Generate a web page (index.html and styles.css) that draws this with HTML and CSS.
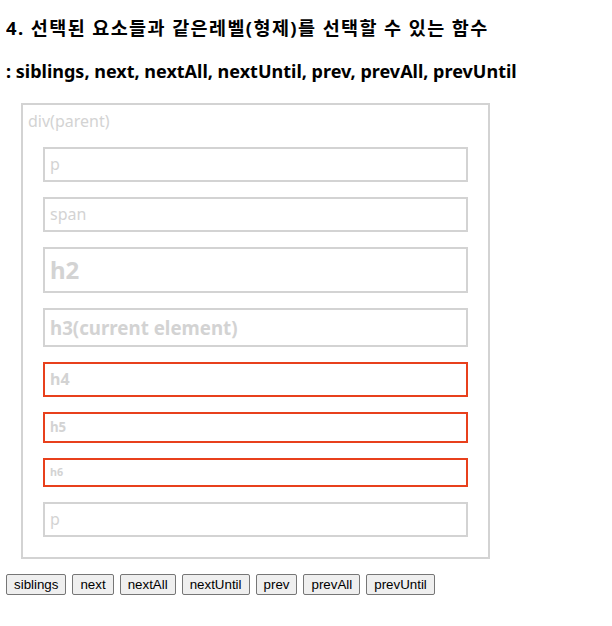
FILE: index.html
```html
<!DOCTYPE html>
<html lang="ko">

<head>
    <meta charset="UTF-8" />
    <title>jQuery siblings</title>
    <link rel="stylesheet" href="styles.css">
</head>

<body>
    <h3 class="title">4. 선택된 요소들과 같은레벨(형제)를 선택할 수 있는 함수</h3>
    <h3>: siblings, next, nextAll, nextUntil, prev, prevAll, prevUntil</h3>

    <div class="siblings">div(parent)
        <p>p</p>
        <span>span</span>
        <h2>h2</h2>
        <h3 class="current">h3(current element)</h3>
        <h4 class="hit">h4</h4>
        <h5 class="hit">h5</h5>
        <h6 class="hit">h6</h6>
        <p>p</p>
    </div>

    <div class="buttons">
        <button>siblings</button>
        <button>next</button>
        <button>nextAll</button>
        <button>nextUntil</button>
        <button>prev</button>
        <button>prevAll</button>
        <button>prevUntil</button>
    </div>
</body>

</html>
```

FILE: styles.css
```css
body {
    margin: 0 6px;
    font-family: "Noto Sans", "Noto Sans CJK KR", sans-serif;
    color: #000;
}

h3 {
    font-size: 18px;
    line-height: 25px;
    margin: 19px 0;
}

h3.title {
    margin-top: 15px;
    font-size: 18.5px;
    letter-spacing: 1.4px;
}

.siblings {
    width: 455px;
    margin: 15px;
    padding: 5px;
    border: 2px solid lightgrey;
    color: lightgrey;
    font-size: 16px;
    line-height: 22px;
}

.siblings * {
    display: block;
    margin: 15px;
    padding: 5px;
    border: 2px solid lightgrey;
    color: lightgrey;
    line-height: 21px;
}

.siblings h2 {
    font-size: 24px;
    line-height: 32px;
}

.siblings h3 {
    font-size: 18.72px;
    line-height: 25px;
    letter-spacing: 0;
}

.siblings h4 {
    font-size: 16px;
    line-height: 21px;
}

.siblings h5 {
    font-size: 13.28px;
    line-height: 17px;
}

.siblings h6 {
    font-size: 10.72px;
    line-height: 15px;
}

.siblings .hit {
    border-color: #e8401c;
}

.buttons {
    display: flex;
    gap: 6px;
    margin-top: 3px;
}

.buttons button {
    font-family: "Liberation Sans", Arial, sans-serif;
    font-size: 13.33px;
    line-height: 15px;
    padding: 2px 7px;
    background: #efefef;
    border: 1px solid #767676;
    border-radius: 2px;
    color: #000;
}
```
